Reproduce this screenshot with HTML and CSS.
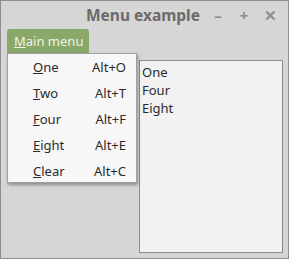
FILE: index.html
```html
<!DOCTYPE html>
<html lang="en">
<head>
    <meta charset="UTF-8">
    <title>Menu example</title>
    <link rel="stylesheet" href="styles.css">
</head>
<body>
    <div class="window">
        <div class="titlebar">
            <span class="title">Menu example</span>
            <div class="controls">
                <span class="ctl">&#8211;</span>
                <span class="ctl">+</span>
                <span class="ctl">&#10005;</span>
            </div>
        </div>
        <div class="menubar">
            <span class="menu-button"><u>M</u>ain menu</span>
        </div>
        <div class="content">
            <div class="listbox">
                <div>One</div>
                <div>Four</div>
                <div>Eight</div>
            </div>
        </div>

        <!-- popup opened from Main menu -->
        <ul class="dropdown">
            <li><span><u>O</u>ne</span><span class="key">Alt+O</span></li>
            <li><span><u>T</u>wo</span><span class="key">Alt+T</span></li>
            <li><span><u>F</u>our</span><span class="key">Alt+F</span></li>
            <li><span><u>E</u>ight</span><span class="key">Alt+E</span></li>
            <li><span><u>C</u>lear</span><span class="key">Alt+C</span></li>
        </ul>
    </div>
</body>
</html>
```

FILE: styles.css
```css
:root {
    --window-bg: #d6d6d6;
    --border: #8e8e8e;
    --green: #8aa86a;
    --text: #2b2b2b;
}
body {
    margin: 0;
    font-family: "Noto Sans", sans-serif;
    font-size: 13px;
    color: var(--text);
}
.window {
    position: relative;
    width: 289px;
    height: 259px;
    box-sizing: border-box;
    border: 1px solid var(--border);
    background: var(--window-bg);
}
.titlebar {
    height: 28px;
    display: flex;
    align-items: center;
    justify-content: flex-end;
    padding-right: 11px;
}
.title {
    font-size: 15.5px;
    font-weight: bold;
    color: #6b6b6b;
    margin-right: 11px;
}
.controls {
    display: flex;
    gap: 12px;
}
.ctl {
    width: 14px;
    text-align: center;
    font-size: 15px;
    font-weight: bold;
    color: #8c8c8c;
}
.menubar {
    padding-left: 6px;
    height: 24px;
}
.menu-button {
    display: inline-block;
    height: 24px;
    line-height: 24px;
    padding: 0 6px 0 7px;
    background: var(--green);
    border-radius: 3px 3px 0 0;
    color: #eef3e6;
}
.content {
    padding: 7px 0 0 138px;
}
.listbox {
    width: 144px;
    height: 193px;
    box-sizing: border-box;
    border: 1px solid var(--border);
    background: #f2f2f2;
    padding: 2px 2px;
    line-height: 18px;
}
.dropdown {
    position: absolute;
    left: 6px;
    top: 52px;
    width: 130px;
    height: 130px;
    box-sizing: border-box;
    margin: 0;
    padding: 0;
    overflow: hidden;
    list-style: none;
    background: #f7f7f7;
    border: 1px solid #a0a0a0;
    box-shadow: 1px 2px 3px rgba(0, 0, 0, 0.35);
}
.dropdown li {
    display: flex;
    justify-content: space-between;
    height: 26px;
    align-items: center;
    padding: 0 10px 0 25px;
}
```
